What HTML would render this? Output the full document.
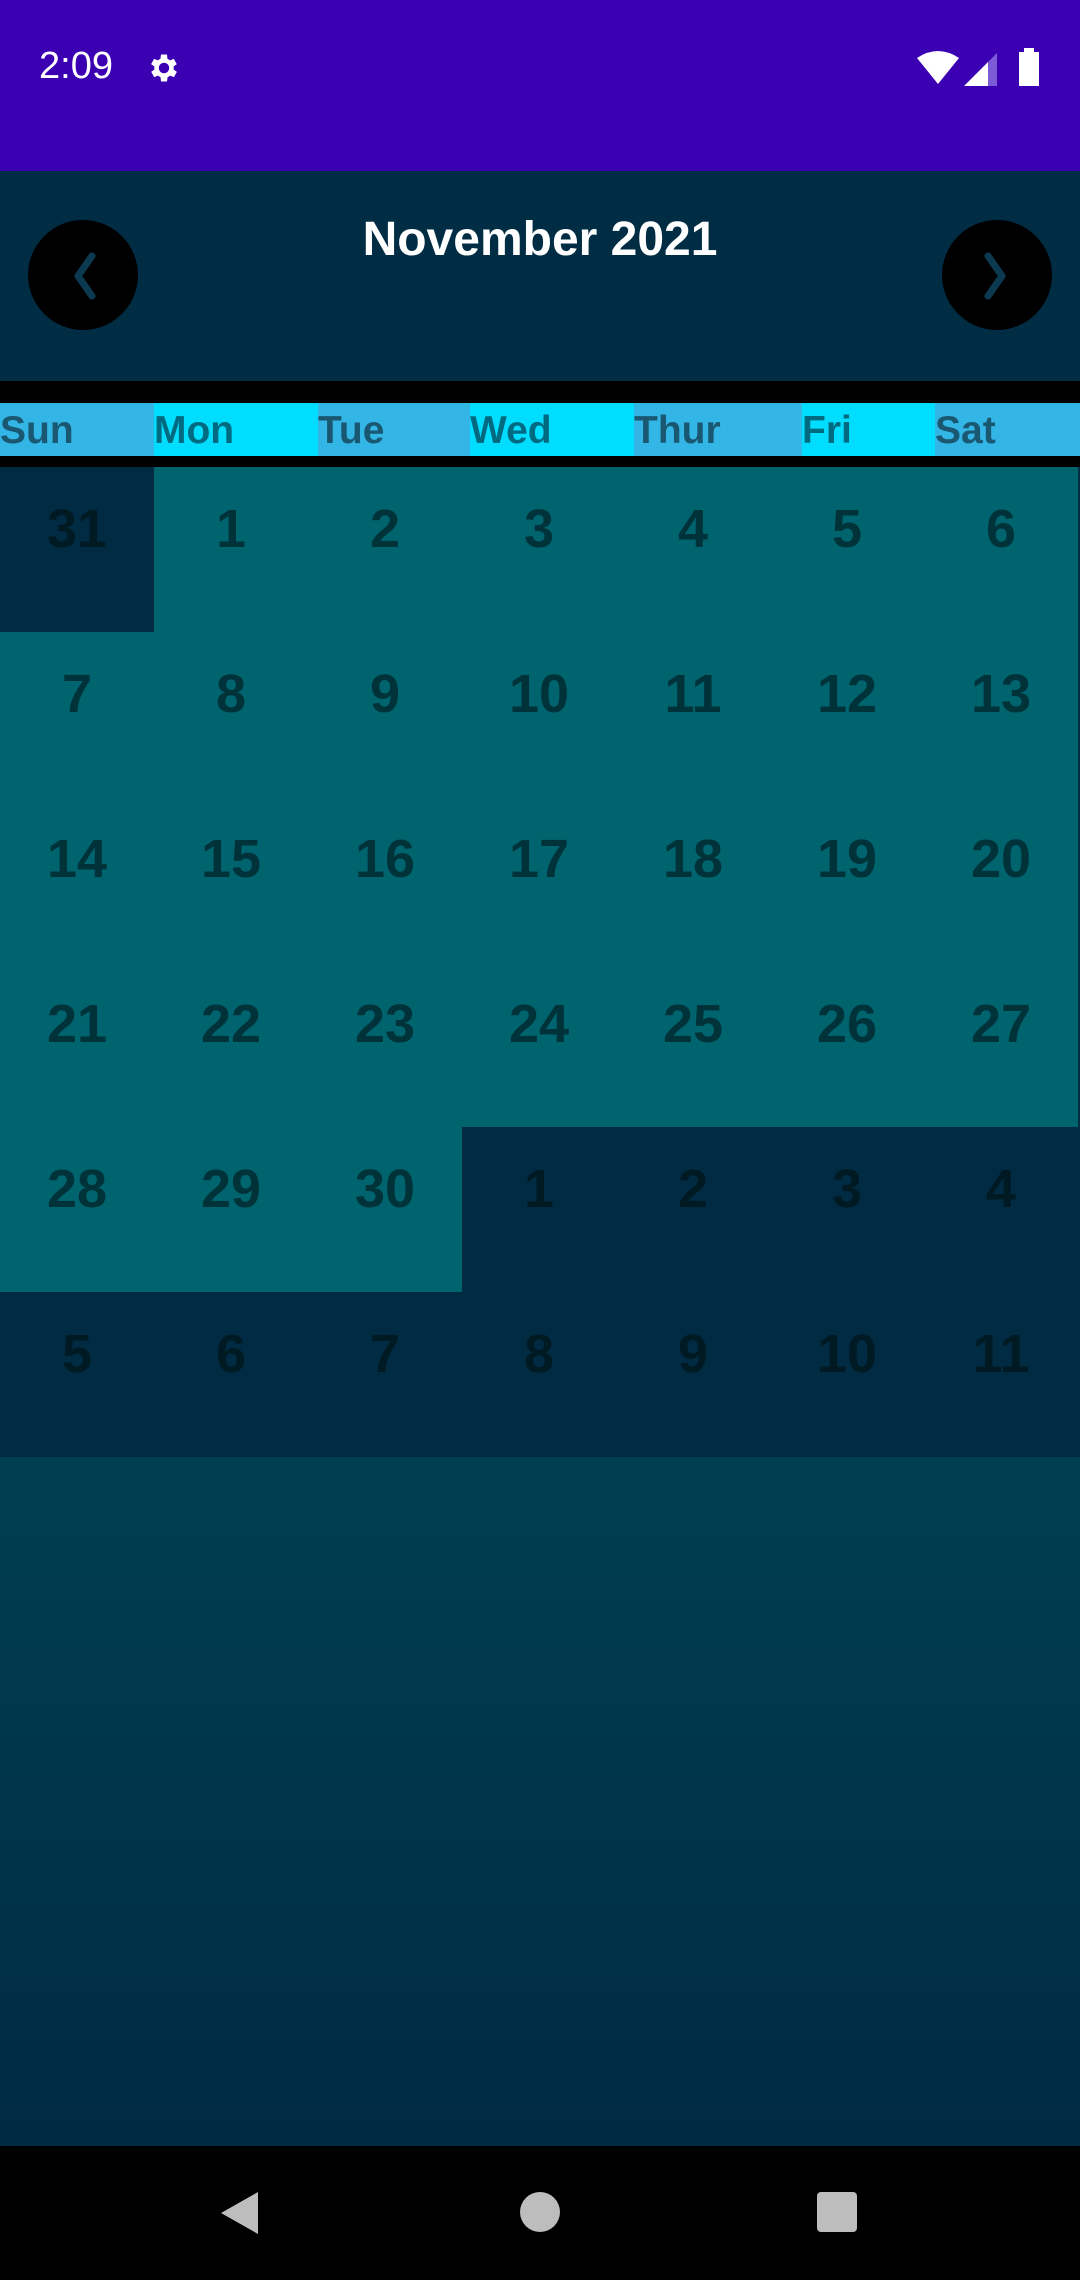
<!DOCTYPE html>
<html><head><meta charset="utf-8"><style>
*{margin:0;padding:0;box-sizing:border-box}
body{width:1080px;height:2280px;overflow:hidden;background:#000;font-family:"Liberation Sans",Roboto,sans-serif;position:relative}
.abs{position:absolute}
#sb{left:0;top:0;width:1080px;height:171px;background:#3C00B3}
#hd{left:0;top:171px;width:1080px;height:210px;background:#002D44}
#title{left:0;top:212px;width:1080px;text-align:center;color:#fff;font-weight:bold;font-size:48px}
.btn{width:110px;height:110px;border-radius:50%;background:#000;top:220px}
#days{left:0;top:403px;width:1080px;height:53px;display:flex}
#days div{height:53px;font-weight:bold;font-size:39px;line-height:56px;color:#1A5872}
.c1{background:#33B5E5}.c2{background:#00DDFF;color:#006A80!important}
#grid{left:0;top:467px;width:1078px}
.row{display:flex;height:165px}
.cell{width:154px;height:165px;text-align:center;font-weight:bold;font-size:54px;padding-top:31px;color:#00323A;background:#00646E}
.o{background:#002B42;color:#001A24}
#bot{left:0;top:1457px;width:1080px;height:689px;background:linear-gradient(#003F52,#002A42)}
#nav{left:0;top:2146px;width:1080px;height:134px;background:#000}
</style></head><body>
<div id="sb" class="abs">
 <div class="abs" style="left:39px;top:45px;color:#fff;font-size:38px">2:09</div>
 <svg class="abs" style="left:146px;top:50px" width="36" height="36" viewBox="0 0 24 24"><path fill="#fff" d="M19.4 13a7.5 7.5 0 000-2l2.1-1.6-2-3.5-2.5 1a7 7 0 00-1.7-1L15 3h-4l-.4 2.9a7 7 0 00-1.7 1l-2.5-1-2 3.5L6.6 11a7.5 7.5 0 000 2l-2.1 1.6 2 3.5 2.5-1a7 7 0 001.7 1L11 21h4l.4-2.9a7 7 0 001.7-1l2.5 1 2-3.5zM13 15.5a3.5 3.5 0 110-7 3.5 3.5 0 010 7z" transform="translate(-1 0)"/></svg>
 <svg class="abs" style="left:915px;top:50px" width="46" height="36" viewBox="0 0 46 36"><path fill="#fff" d="M2 8Q23-6 44 8L23 34Z"/></svg>
 <svg class="abs" style="left:964px;top:50px" width="36" height="36" viewBox="0 0 36 36"><path fill="#fff" d="M0 36L24 12V36Z"/><path fill="#7B5CD6" d="M24 12L33 3V36H24Z"/></svg>
 <svg class="abs" style="left:1018px;top:48px" width="22" height="38" viewBox="0 0 22 38"><path fill="#fff" d="M6 0h10v4h5v34H1V4h5z"/></svg>
</div>
<div id="hd" class="abs"></div>
<div id="title" class="abs">November 2021</div>
<div class="abs btn" style="left:28px"><svg width="110" height="110" viewBox="0 0 110 110"><path d="M64 36L50 56L64 76" stroke="#0B3A50" stroke-width="7" fill="none" stroke-linecap="round" stroke-linejoin="round"/></svg></div>
<div class="abs btn" style="left:942px"><svg width="110" height="110" viewBox="0 0 110 110"><path d="M46 36L60 56L46 76" stroke="#0B3A50" stroke-width="7" fill="none" stroke-linecap="round" stroke-linejoin="round"/></svg></div>
<div id="days" class="abs">
 <div class="c1" style="width:154px">Sun</div>
 <div class="c2" style="width:164px">Mon</div>
 <div class="c1" style="width:152px">Tue</div>
 <div class="c2" style="width:164px">Wed</div>
 <div class="c1" style="width:168px">Thur</div>
 <div class="c2" style="width:133px">Fri</div>
 <div class="c1" style="width:145px">Sat</div>
</div>
<div id="grid" class="abs">
 <div class="row"><div class="cell o">31</div><div class="cell">1</div><div class="cell">2</div><div class="cell">3</div><div class="cell">4</div><div class="cell">5</div><div class="cell">6</div></div>
 <div class="row"><div class="cell">7</div><div class="cell">8</div><div class="cell">9</div><div class="cell">10</div><div class="cell">11</div><div class="cell">12</div><div class="cell">13</div></div>
 <div class="row"><div class="cell">14</div><div class="cell">15</div><div class="cell">16</div><div class="cell">17</div><div class="cell">18</div><div class="cell">19</div><div class="cell">20</div></div>
 <div class="row"><div class="cell">21</div><div class="cell">22</div><div class="cell">23</div><div class="cell">24</div><div class="cell">25</div><div class="cell">26</div><div class="cell">27</div></div>
 <div class="row"><div class="cell">28</div><div class="cell">29</div><div class="cell">30</div><div class="cell o">1</div><div class="cell o">2</div><div class="cell o">3</div><div class="cell o">4</div></div>
 <div class="row"><div class="cell o">5</div><div class="cell o">6</div><div class="cell o">7</div><div class="cell o">8</div><div class="cell o">9</div><div class="cell o">10</div><div class="cell o">11</div></div>
</div>
<div class="abs" style="left:1078px;top:467px;width:2px;height:990px;background:#002D44"></div>
<div id="bot" class="abs"></div>
<div id="nav" class="abs">
 <svg class="abs" style="left:218px;top:44px" width="44" height="46" viewBox="0 0 44 46"><path fill="#BDBDBD" d="M40 2V44L3 23Z"/></svg>
 <div class="abs" style="left:520px;top:46px;width:40px;height:40px;border-radius:50%;background:#BDBDBD"></div>
 <div class="abs" style="left:817px;top:46px;width:40px;height:40px;border-radius:4px;background:#BDBDBD"></div>
</div>
</body></html>
